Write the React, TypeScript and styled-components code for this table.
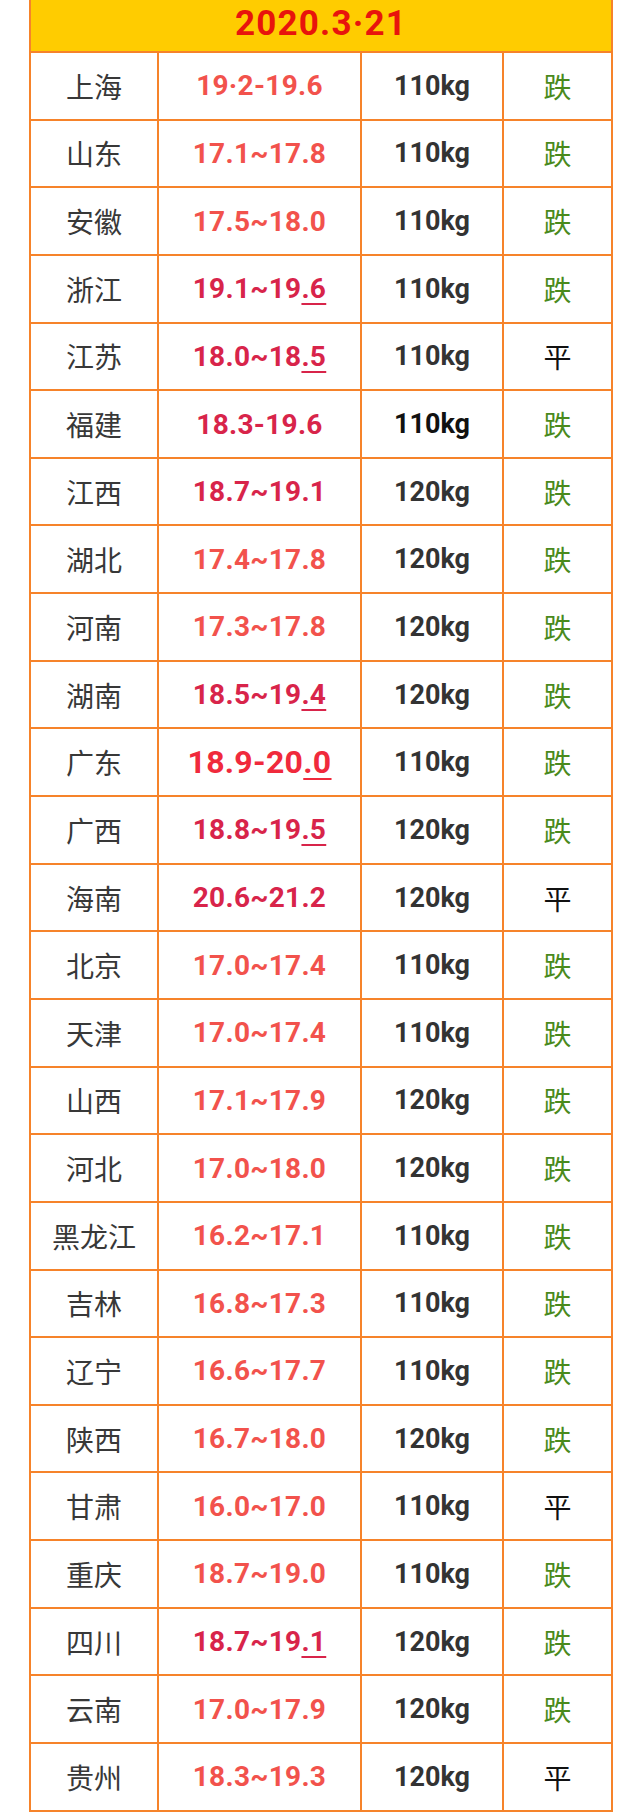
import { FC } from "react";
import styled, { createGlobalStyle } from "styled-components";

type Tone = "coral" | "crimson" | "bright";

interface Row {
    name: string;
    price: string;
    mark?: string; // underlined tail of the price
    tone: Tone;
    kg: string;
    dark?: boolean;
    trend: "跌" | "平";
}

const rows: Row[] = [
    { name: "上海", price: "19·2-19.6", tone: "coral", kg: "110kg", trend: "跌" },
    { name: "山东", price: "17.1~17.8", tone: "coral", kg: "110kg", trend: "跌" },
    { name: "安徽", price: "17.5~18.0", tone: "coral", kg: "110kg", trend: "跌" },
    { name: "浙江", price: "19.1~19", mark: ".6", tone: "crimson", kg: "110kg", trend: "跌" },
    { name: "江苏", price: "18.0~18", mark: ".5", tone: "crimson", kg: "110kg", trend: "平" },
    { name: "福建", price: "18.3-19.6", tone: "crimson", kg: "110kg", dark: true, trend: "跌" },
    { name: "江西", price: "18.7~19.1", tone: "crimson", kg: "120kg", trend: "跌" },
    { name: "湖北", price: "17.4~17.8", tone: "coral", kg: "120kg", trend: "跌" },
    { name: "河南", price: "17.3~17.8", tone: "coral", kg: "120kg", trend: "跌" },
    { name: "湖南", price: "18.5~19", mark: ".4", tone: "crimson", kg: "120kg", trend: "跌" },
    { name: "广东", price: "18.9-20", mark: ".0", tone: "bright", kg: "110kg", trend: "跌" },
    { name: "广西", price: "18.8~19", mark: ".5", tone: "crimson", kg: "120kg", trend: "跌" },
    { name: "海南", price: "20.6~21.2", tone: "crimson", kg: "120kg", trend: "平" },
    { name: "北京", price: "17.0~17.4", tone: "coral", kg: "110kg", trend: "跌" },
    { name: "天津", price: "17.0~17.4", tone: "coral", kg: "110kg", trend: "跌" },
    { name: "山西", price: "17.1~17.9", tone: "coral", kg: "120kg", trend: "跌" },
    { name: "河北", price: "17.0~18.0", tone: "coral", kg: "120kg", trend: "跌" },
    { name: "黑龙江", price: "16.2~17.1", tone: "coral", kg: "110kg", trend: "跌" },
    { name: "吉林", price: "16.8~17.3", tone: "coral", kg: "110kg", trend: "跌" },
    { name: "辽宁", price: "16.6~17.7", tone: "coral", kg: "110kg", trend: "跌" },
    { name: "陕西", price: "16.7~18.0", tone: "coral", kg: "120kg", trend: "跌" },
    { name: "甘肃", price: "16.0~17.0", tone: "coral", kg: "110kg", trend: "平" },
    { name: "重庆", price: "18.7~19.0", tone: "coral", kg: "110kg", trend: "跌" },
    { name: "四川", price: "18.7~19", mark: ".1", tone: "crimson", kg: "120kg", trend: "跌" },
    { name: "云南", price: "17.0~17.9", tone: "coral", kg: "120kg", trend: "跌" },
    { name: "贵州", price: "18.3~19.3", tone: "coral", kg: "120kg", trend: "平" },
];

const toneColor: Record<Tone, string> = {
    coral: "#f2524c",
    crimson: "#d8244a",
    bright: "#f02a3c",
};

const App: FC = () => {
    return (
        <>
            <GlobalStyle />
            <Page>
                <PriceTable>
                    <colgroup>
                        <col style={{ width: 128 }} />
                        <col style={{ width: 203 }} />
                        <col style={{ width: 142 }} />
                        <col style={{ width: 109 }} />
                    </colgroup>
                    <thead>
                        <HeadRow>
                            <DateCell colSpan={4}>2020.3·21</DateCell>
                        </HeadRow>
                    </thead>
                    <tbody>
                        {rows.map((r) => (
                            <BodyRow key={r.name}>
                                <NameCell>{r.name}</NameCell>
                                <PriceCell $tone={r.tone}>
                                    {r.price}
                                    {r.mark && <Mark>{r.mark}</Mark>}
                                </PriceCell>
                                <KgCell $dark={!!r.dark}>{r.kg}</KgCell>
                                <TrendCell $flat={r.trend === "平"}>{r.trend}</TrendCell>
                            </BodyRow>
                        ))}
                    </tbody>
                </PriceTable>
            </Page>
        </>
    );
};

export default App;

const GlobalStyle = createGlobalStyle`
    html, body {
        margin: 0;
        padding: 0;
        background: #fff;
    }
    body {
        font-family: Roboto, "Noto Sans CJK SC", sans-serif;
    }
`;

const Page = styled.div`
    width: 640px;
    padding: 0 29px 4px 29px;
    box-sizing: border-box;
`;

const PriceTable = styled.table`
    width: 582px;
    border-collapse: collapse;
    table-layout: fixed;
    td {
        border: 2px solid #f6832a;
        text-align: center;
        vertical-align: middle;
        padding: 0;
        white-space: nowrap;
    }
`;

const HeadRow = styled.tr`
    height: 52px;
`;

const BodyRow = styled.tr`
    height: 67.65px;
`;

const DateCell = styled.td`
    && {
        border-top: none;
    }
    background: #ffcc00;
    color: #e8140c;
    font-family: Roboto, sans-serif;
    font-weight: 700;
    font-size: 35px;
    letter-spacing: 1.2px;
    line-height: 1;
    padding-bottom: 4px !important;
`;

const NameCell = styled.td`
    font-family: "Noto Sans CJK SC", sans-serif;
    font-size: 28px;
    color: #383838;
`;

const PriceCell = styled.td<{ $tone: Tone }>`
    font-family: Roboto, sans-serif;
    font-weight: 700;
    font-size: ${(p) => (p.$tone === "bright" ? "32px" : "28px")};
    letter-spacing: 0.3px;
    color: ${(p) => toneColor[p.$tone]};
`;

const Mark = styled.span`
    text-decoration: underline;
    text-decoration-thickness: 2px;
    text-underline-offset: 5px;
`;

const KgCell = styled.td<{ $dark: boolean }>`
    font-family: Roboto, sans-serif;
    font-weight: 700;
    font-size: 27px;
    color: ${(p) => (p.$dark ? "#111" : "#333")};
`;

const TrendCell = styled.td<{ $flat: boolean }>`
    font-family: "Noto Sans CJK SC", sans-serif;
    font-size: 28px;
    color: ${(p) => (p.$flat ? "#111" : "#4a8a1c")};
`;
